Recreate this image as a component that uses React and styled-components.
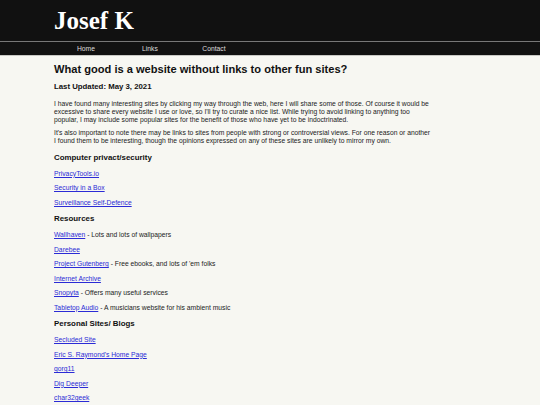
import React from 'react';
import styled, { createGlobalStyle } from 'styled-components';

// --- Global page look ---
const GlobalStyle = createGlobalStyle`
  html, body {
    margin: 0;
    padding: 0;
    background: #f7f7f2;
  }
  body {
    font-family: 'Liberation Sans', Arial, sans-serif;
    font-size: 6.76px;
    line-height: 8px;
    color: #222;
  }
`;

// --- Shared centered column ---
const Wrap = styled.div`
  width: 80%;
  margin: 0 auto;
`;

// --- Header with site name ---
const Header = styled.header`
  background: #111;
  height: 41px;
  display: flex;
  align-items: center;
`;

const SiteName = styled.h1`
  margin: 0;
  font-family: 'Liberation Serif', 'Times New Roman', serif;
  font-size: 25px;
  font-weight: 700;
  line-height: 28px;
  color: #fff;
`;

// --- Navigation strip ---
const Nav = styled.nav`
  background: #111;
  border-top: 1px solid #777;
  border-bottom: 1px solid #c8c8c4;
  height: 13px;
  display: flex;
  align-items: center;
`;

const NavList = styled.ul`
  list-style: none;
  margin: 0;
  padding: 0;
  display: flex;
`;

const NavItem = styled.li`
  width: 64px;
  text-align: center;
  a {
    color: #ddd;
    text-decoration: none;
  }
`;

// --- Main content ---
const Main = styled.main`
  padding-top: 6.5px;
  max-width: 377px;
`;

const Title = styled.h2`
  margin: 0 0 6.5px 0;
  font-size: 11.1px;
  line-height: 13px;
  font-weight: 700;
  color: #111;
  white-space: nowrap;
`;

const Updated = styled.h3`
  margin: 0 0 8px 0;
  font-size: 7.8px;
  line-height: 10px;
  font-weight: 700;
  color: #111;
`;

const Para = styled.p`
  margin: 5px 0;
`;

const Section = styled.h4`
  margin: 7.5px 0 7px 0;
  font-size: 7.9px;
  line-height: 10px;
  font-weight: 700;
  color: #111;
`;

const LinkLine = styled.p`
  margin: 6.5px 0;
  a {
    color: #2b2bd6;
    text-decoration: underline;
  }
`;

const sections = [
  {
    title: 'Computer privact/security',
    links: [
      ['PrivacyTools.io'],
      ['Security in a Box'],
      ['Surveillance Self-Defence'],
    ],
  },
  {
    title: 'Resources',
    links: [
      ['Wallhaven', 'Lots and lots of wallpapers'],
      ['Darebee'],
      ['Project Gutenberg', "Free ebooks, and lots of 'em folks"],
      ['Internet Archive'],
      ['Snopyta', 'Offers many useful services'],
      ['Tabletop Audio', 'A musicians website for his ambient music'],
    ],
  },
  {
    title: 'Personal Sites/ Blogs',
    links: [
      ['Secluded Site'],
      ["Eric S. Raymond's Home Page"],
      ['qorg11'],
      ['Dig Deeper'],
      ['char32geek'],
    ],
  },
];

export default function App() {
  return (
    <>
      <GlobalStyle />
      <Header>
        <Wrap>
          <SiteName>Josef K</SiteName>
        </Wrap>
      </Header>
      <Nav>
        <Wrap>
          <NavList>
            <NavItem><a href="#">Home</a></NavItem>
            <NavItem><a href="#">Links</a></NavItem>
            <NavItem><a href="#">Contact</a></NavItem>
          </NavList>
        </Wrap>
      </Nav>
      <Wrap>
        <Main>
          <Title>What good is a website without links to other fun sites?</Title>
          <Updated>Last Updated: May 3, 2021</Updated>
          <Para>
            I have found many interesting sites by clicking my way through the web, here I will share some of those. Of course it would be
            excessive to share every website I use or love, so I'll try to curate a nice list. While trying to avoid linking to anything too
            popular, I may include some popular sites for the benefit of those who have yet to be indoctrinated.
          </Para>
          <Para>
            It's also important to note there may be links to sites from people with strong or controversial views. For one reason or another
            I found them to be interesting, though the opinions expressed on any of these sites are unlikely to mirror my own.
          </Para>
          {sections.map((s) => (
            <React.Fragment key={s.title}>
              <Section>{s.title}</Section>
              {s.links.map(([name, note]) => (
                <LinkLine key={name}>
                  <a href="#">{name}</a>
                  {note && ` - ${note}`}
                </LinkLine>
              ))}
            </React.Fragment>
          ))}
        </Main>
      </Wrap>
    </>
  );
}
